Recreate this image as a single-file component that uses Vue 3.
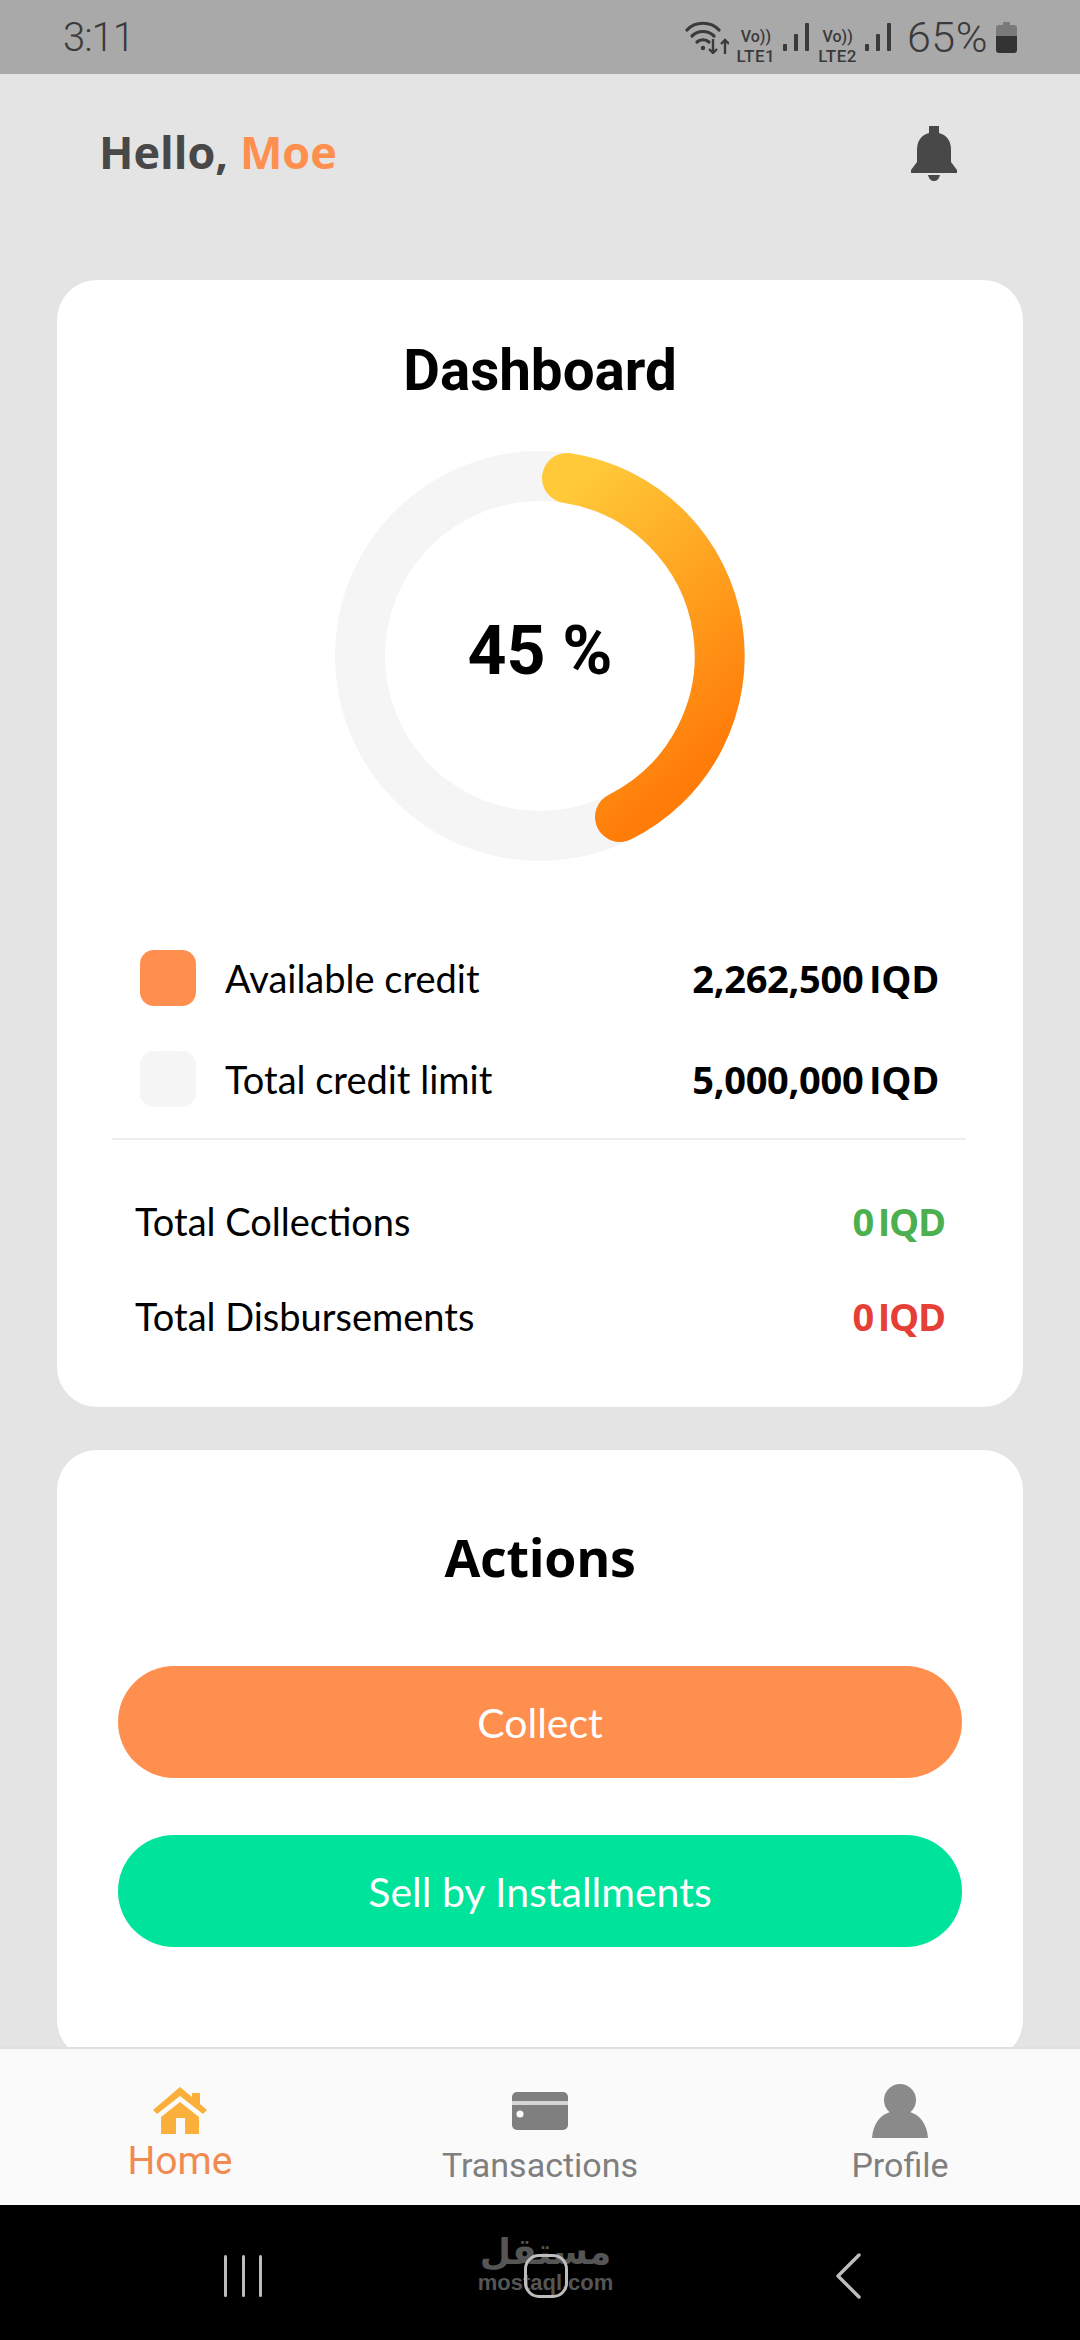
<script setup>
const legend = [
  { label: 'Available credit', value: '2,262,500 IQD', swatch: 'swatch-orange' },
  { label: 'Total credit limit', value: '5,000,000 IQD', swatch: 'swatch-grey' },
]
const totals = [
  { label: 'Total Collections', value: '0 IQD', tone: 'green' },
  { label: 'Total Disbursements', value: '0 IQD', tone: 'red' },
]
</script>

<template>
  <div class="phone">
    <header class="status">
      <span class="clock">3:11</span>
      <div class="status-right">
        <svg class="wifi" width="44" height="33" viewBox="0 0 44 33">
          <g fill="none" stroke="#3a3a3a" stroke-width="3.2" stroke-linecap="round">
            <path d="M2 9 C10 0 26 0 34 9" />
            <path d="M7 15 C13 9 23 9 29 15" />
            <path d="M12 21 C15 18 21 18 24 21" />
          </g>
          <circle cx="18" cy="27" r="2.2" fill="#3a3a3a" />
          <path d="M28 18v14m-4-4 4 4 4-4M40 33V19m-4 4 4-4 4 4" fill="none" stroke="#3a3a3a" stroke-width="2.4" />
        </svg>
        <div class="sim"><span class="vo">Vo))</span><span class="lte">LTE1</span></div>
        <svg class="bars" width="27" height="28" viewBox="0 0 27 28"><g fill="#3a3a3a"><rect x="0" y="21" width="4" height="7" rx="1" /><rect x="11" y="11" width="4" height="17" rx="1" /><rect x="22" y="0" width="4" height="28" rx="1" /></g></svg>
        <div class="sim"><span class="vo">Vo))</span><span class="lte">LTE2</span></div>
        <svg class="bars" width="27" height="28" viewBox="0 0 27 28"><g fill="#3a3a3a"><rect x="0" y="21" width="4" height="7" rx="1" /><rect x="11" y="11" width="4" height="17" rx="1" /><rect x="22" y="0" width="4" height="28" rx="1" /></g></svg>
        <span class="pct">65%</span>
        <svg class="batt" width="21" height="31" viewBox="0 0 21 31"><path d="M7 0h7v3h4a3 3 0 0 1 3 3v8H0V6a3 3 0 0 1 3-3h4z" fill="#7a7a7a" /><path d="M0 14h21v14a3 3 0 0 1-3 3H3a3 3 0 0 1-3-3z" fill="#333" /></svg>
      </div>
    </header>

    <main class="content">
      <div class="greeting">
        <h1 class="hello">Hello, <span class="name">Moe</span></h1>
        <svg class="bell" width="46" height="55" viewBox="0 0 46 55">
          <path d="M18 0H28V7C36 9 40 15 40 24V36L46 44V47H0V44L6 36V24C6 15 10 9 18 7Z" fill="#484848" />
          <path d="M17 49H29C28 53 26 55 23 55C20 55 18 53 17 49Z" fill="#484848" />
        </svg>
      </div>

      <section class="card dash">
        <h2 class="dash-title">Dashboard</h2>
        <div class="ring">
          <svg width="410" height="410" viewBox="0 0 410 410">
            <defs>
              <linearGradient id="arc" x1="0.1" y1="0" x2="0.5" y2="1">
                <stop offset="0" stop-color="#ffc939" />
                <stop offset="1" stop-color="#ff7c08" />
              </linearGradient>
            </defs>
            <circle cx="205" cy="205" r="180" fill="none" stroke="#f5f5f5" stroke-width="50" />
            <path d="M232 27 A180 180 0 0 1 285 366" fill="none" stroke="url(#arc)" stroke-width="50" stroke-linecap="round" />
          </svg>
          <span class="ring-label">45 %</span>
        </div>

        <div class="legend">
          <div v-for="row in legend" :key="row.label" class="legend-row">
            <span class="swatch" :class="row.swatch"></span>
            <span class="row-label">{{ row.label }}</span>
            <span class="row-value">{{ row.value }}</span>
          </div>
        </div>
        <div class="rule"></div>
        <div class="totals">
          <div v-for="row in totals" :key="row.label" class="total-row">
            <span class="row-label">{{ row.label }}</span>
            <span class="row-value" :class="row.tone">{{ row.value }}</span>
          </div>
        </div>
      </section>

      <section class="card actions">
        <h2 class="actions-title">Actions</h2>
        <button class="btn btn-orange">Collect</button>
        <button class="btn btn-green">Sell by Installments</button>
      </section>
    </main>

    <nav class="tabs">
      <div class="tab tab-home">
        <svg width="54" height="47" viewBox="0 0 54 47">
          <path d="M27 0L39 10V6H47V17L54 23L50 27L27 9L4 27L0 23Z" fill="#fbb03b" />
          <path d="M27 15L46 30V47H32V31H23V47H8V30Z" fill="#fbb03b" />
        </svg>
        <span class="tab-label active">Home</span>
      </div>
      <div class="tab tab-trans">
        <svg width="56" height="38" viewBox="0 0 56 38">
          <rect width="56" height="38" rx="5" fill="#7f7f7f" />
          <rect y="9" width="56" height="4" fill="#d6d6d6" />
          <circle cx="8" cy="22" r="3.5" fill="#fafafa" />
        </svg>
        <span class="tab-label">Transactions</span>
      </div>
      <div class="tab tab-profile">
        <svg width="56" height="54" viewBox="0 0 56 54">
          <circle cx="28" cy="16" r="16" fill="#8a8a8a" />
          <path d="M0 54C1 40 8 31 18 28H38C48 31 55 40 56 54Z" fill="#8a8a8a" />
        </svg>
        <span class="tab-label">Profile</span>
      </div>
    </nav>

    <footer class="sysnav">
      <svg width="38" height="42" viewBox="0 0 38 42"><g fill="#bdbdbd"><rect x="0" y="0" width="3" height="42" rx="1.5" /><rect x="18" y="0" width="3" height="42" rx="1.5" /><rect x="35" y="0" width="3" height="42" rx="1.5" /></g></svg>
      <div class="home-wrap">
        <div class="mark"><span class="mark-ar">مستقل</span><span class="mark-en">mostaql.com</span></div>
        <span class="home-key"></span>
      </div>
      <svg width="26" height="46" viewBox="0 0 26 46"><path d="M24 2 L3 23 L24 44" fill="none" stroke="#bdbdbd" stroke-width="3.4" stroke-linecap="round" stroke-linejoin="round" /></svg>
    </footer>
  </div>
</template>

<style>
html, body { margin: 0; background: #e4e4e4; }
</style>

<style scoped>
.phone {
  width: 1080px;
  height: 2340px;
  display: flex;
  flex-direction: column;
  overflow: hidden;
  background: #e4e4e4;
  font-family: "Open Sans", "Liberation Sans", sans-serif;
}
.status {
  height: 74px;
  flex: none;
  background: #a9a9a9;
  display: flex;
  align-items: center;
  justify-content: space-between;
  padding: 0 63px;
  box-sizing: border-box;
  color: #3a3a3a;
  font-family: Roboto, sans-serif;
}
.clock { font-size: 40px; font-weight: 300; letter-spacing: -1px; }
.status-right { display: flex; align-items: center; gap: 8px; }
.sim { display: flex; flex-direction: column; align-items: center; margin-top: 19px; }
.vo { font-size: 16px; line-height: 19px; font-weight: 500; }
.lte { font-size: 17px; line-height: 20px; font-weight: 500; letter-spacing: 0.5px; }
.pct { font-size: 43px; font-weight: 300; letter-spacing: 0.5px; margin-left: 7px; }
.content {
  flex: 1;
  min-height: 0;
  padding: 0 57px;
  display: flex;
  flex-direction: column;
}
.greeting {
  height: 206px;
  flex: none;
  display: flex;
  align-items: flex-start;
  justify-content: space-between;
  padding: 50px 66px 0 42px;
  box-sizing: border-box;
}
.hello {
  margin: 0;
  font-size: 45px;
  line-height: 56px;
  font-weight: 700;
  color: #484848;
}
.name { color: #ff8f4f; }
.bell { margin-top: 2px; }
.card {
  background: #fff;
  border-radius: 40px;
  flex: none;
}
.dash { height: 1127px; padding-top: 61px; box-sizing: border-box; }
.dash-title {
  margin: 0;
  text-align: center;
  font-family: Roboto, sans-serif;
  font-weight: 700;
  font-size: 56.5px;
  line-height: 60px;
  color: #000;
}
.ring {
  position: relative;
  width: 410px;
  height: 410px;
  margin: 50px auto 0;
}
.ring-label {
  position: absolute;
  inset: 0 0 10px;
  display: flex;
  align-items: center;
  justify-content: center;
  font-family: Roboto, sans-serif;
  font-weight: 700;
  font-size: 68px;
  color: #000;
}
.legend { padding: 66px 84px 0 83px; }
.legend-row {
  height: 101px;
  display: flex;
  align-items: center;
}
.swatch { width: 56px; height: 56px; border-radius: 14px; margin-right: 29px; flex: none; }
.swatch-orange { background: #ff8f4f; }
.swatch-grey { background: #f5f5f5; }
.row-label { font-family: Lato, sans-serif; font-size: 38px; color: #000; flex: 1; }
.row-value { font-size: 38px; font-weight: 700; color: #000; word-spacing: -4px; letter-spacing: -0.3px; }
.rule { height: 2px; background: #eeeeee; margin: 9px 57px 0 55px; }
.totals { padding: 33px 78px 0; }
.total-row { height: 95px; display: flex; align-items: center; }
.total-row .row-value { letter-spacing: -1.2px; }
.green { color: #4caf50; }
.red { color: #e53f36; }
.actions { height: 610px; padding-top: 74px; box-sizing: border-box; margin-top: 43px; }
.actions-title {
  margin: 0 0 76px;
  text-align: center;
  font-size: 52px;
  line-height: 66px;
  font-weight: 700;
  letter-spacing: -0.3px;
  color: #000;
}
.btn {
  display: block;
  width: 844px;
  height: 112px;
  margin: 0 auto 57px;
  border: 0;
  border-radius: 56px;
  color: #fff;
  font-family: Lato, sans-serif;
  font-size: 41px;
}
.btn-orange { background: #ff8f4f; }
.btn-green { background: #00e39a; }
.tabs {
  height: 158px;
  flex: none;
  background: #fafafa;
  border-top: 2px solid #e0e0e0;
  box-sizing: border-box;
  display: flex;
  position: relative;
  z-index: 1;
  font-family: Roboto, sans-serif;
}
.tab { width: 360px; display: flex; flex-direction: column; align-items: center; }
.tab-home { padding-top: 38px; gap: 7px; }
.tab-trans { padding-top: 43px; gap: 15px; }
.tab-profile { padding-top: 35px; gap: 7px; }
.tab-label { font-size: 34px; line-height: 40px; color: #7f7f7f; }
.tab-label.active { font-size: 39px; color: #f08a4f; }
.sysnav {
  height: 135px;
  flex: none;
  background: #000;
  display: flex;
  align-items: center;
  justify-content: space-between;
  padding: 7px 219px 0 224px;
  box-sizing: border-box;
}
.home-wrap { position: relative; width: 150px; height: 100px; margin-left: -6px; display: flex; justify-content: center; }
.mark { display: flex; flex-direction: column; align-items: center; color: #555; margin-top: 4px; }
.mark-ar { font-family: "DejaVu Sans", sans-serif; font-weight: 700; font-size: 36px; line-height: 44px; }
.mark-en { font-family: "Liberation Sans", sans-serif; font-size: 22px; line-height: 18px; font-weight: 700; }
.home-key {
  position: absolute;
  left: 50%;
  top: 50%;
  transform: translate(-50%, -50%);
  width: 38px;
  height: 38px;
  border: 3.5px solid #bdbdbd;
  border-radius: 15px;
}
</style>
